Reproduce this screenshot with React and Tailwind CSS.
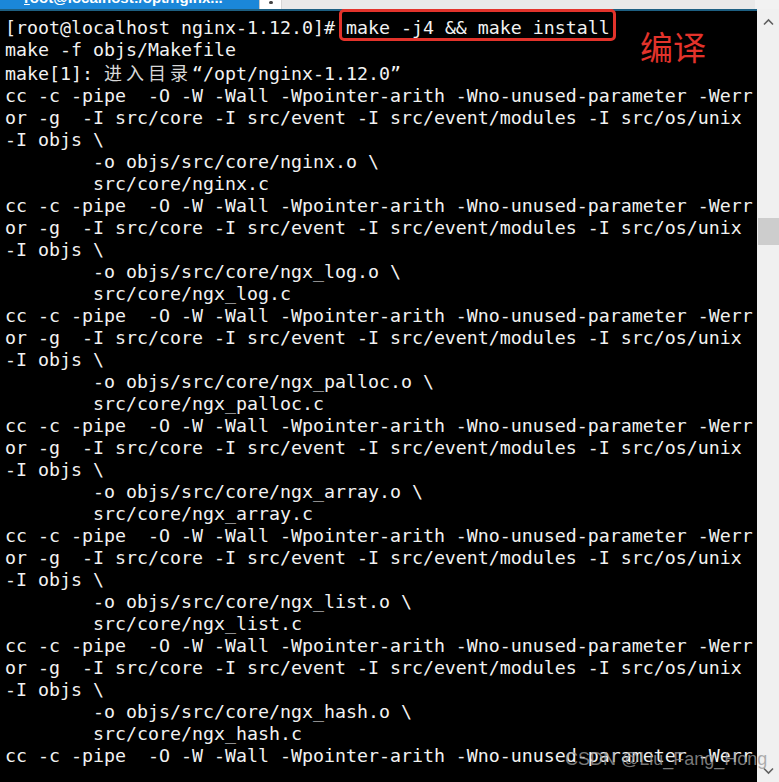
import React from 'react';

const mono = { fontFamily: '"DejaVu Sans Mono", "Liberation Mono", monospace' };

// each compile step in the log prints the same five lines
const files = ['nginx', 'ngx_log', 'ngx_palloc', 'ngx_array', 'ngx_list', 'ngx_hash'];
const ccLine = 'cc -c -pipe  -O -W -Wall -Wpointer-arith -Wno-unused-parameter -Werr';

const Cjk = ({ text }) => (
  <>
    {text.split('').map((ch, i) => (
      <span
        key={i}
        className="inline-block w-[22px] text-[18px] text-[#d8d8d8]"
        style={{ fontFamily: '"Noto Sans CJK SC", sans-serif' }}
      >
        {ch}
      </span>
    ))}
  </>
);

function TabBar() {
  return (
    <div className="flex h-[9px] overflow-hidden">
      <div className="w-[259px] bg-[#1b87d9] relative overflow-hidden">
        <span
          className="absolute left-[24px] -top-[13px] text-[15px] font-bold text-white whitespace-nowrap"
          style={{ fontFamily: '"Liberation Sans", sans-serif' }}
        >
          <span className="underline">r</span>oot@localhost:/opt/nginx...
        </span>
      </div>
      <div className="w-[22px] bg-white border-l border-[#c9c9c9] flex justify-center">
        <div className="w-[4px] h-[3px] bg-[#444] rounded-full mt-[1px]" />
      </div>
      <div className="flex-1 bg-[#e9e9e9] border-l border-[#d6d6d6]" />
      <div className="w-[24px] bg-[#f2f2f2]" />
    </div>
  );
}

function Scrollbar() {
  return (
    <div className="w-[22px] bg-[#f0f0f0] relative flex flex-col">
      <svg className="absolute left-[6px] top-[7px]" width="11" height="8" viewBox="0 0 11 8">
        <path d="M1 6.5 L5.5 2 L10 6.5" fill="none" stroke="#606060" strokeWidth="1.6" />
      </svg>
      <div className="absolute left-[1px] right-0 top-[207px] h-[27px] bg-[#cdcdcd]" />
      <svg className="absolute left-[6px] bottom-[7px]" width="11" height="8" viewBox="0 0 11 8">
        <path d="M1 1.5 L5.5 6 L10 1.5" fill="none" stroke="#606060" strokeWidth="1.6" />
      </svg>
    </div>
  );
}

export default function App() {
  return (
    <div className="w-[779px] h-[782px] overflow-hidden flex flex-col bg-black">
      <TabBar />
      <div className="h-[2px] flex">
        <div className="flex-1 bg-[#1d5f82]" />
        <div className="w-[22px] bg-[#f0f0f0]" />
      </div>
      <div className="flex flex-1 min-h-0 relative">
        <div
          className="flex-1 relative bg-black text-[#f2f2f2] text-[18.27px] leading-[22px] pt-[6px] pl-[5px] whitespace-pre"
          style={mono}
        >
          <div>
            {'[root@localhost nginx-1.12.0]# '}
            <span className="relative">
              make -j4 && make install
              <span className="absolute -left-[7px] -right-[6px] -top-[8px] -bottom-[3px] border-[3px] border-[#e3332b] rounded-[5px] z-10" />
            </span>
          </div>
          <div>make -f objs/Makefile</div>
          <div>
            {'make[1]: '}
            <Cjk text="进入目录" />
            {'“/opt/nginx-1.12.0”'}
          </div>
          {files.map((f) => (
            <React.Fragment key={f}>
              <div>{ccLine}</div>
              <div>{'or -g  -I src/core -I src/event -I src/event/modules -I src/os/unix'}</div>
              <div>{'-I objs \\'}</div>
              <div>{`        -o objs/src/core/${f}.o \\`}</div>
              <div>{`        src/core/${f}.c`}</div>
            </React.Fragment>
          ))}
          <div>{ccLine}</div>

          <span
            className="absolute left-[640px] top-[19px] text-[33px] leading-none text-[#e3332b]"
            style={{ fontFamily: '"Noto Sans CJK SC", sans-serif' }}
          >
            编译
          </span>
        </div>
        <Scrollbar />
        <span
          className="absolute left-[565px] top-[739px] z-20 text-[18px] leading-none text-[#9a9a9a]/80"
          style={{ fontFamily: '"Liberation Sans", sans-serif' }}
        >
          CSDN @Liu_Fang_Hong
        </span>
      </div>
    </div>
  );
}
